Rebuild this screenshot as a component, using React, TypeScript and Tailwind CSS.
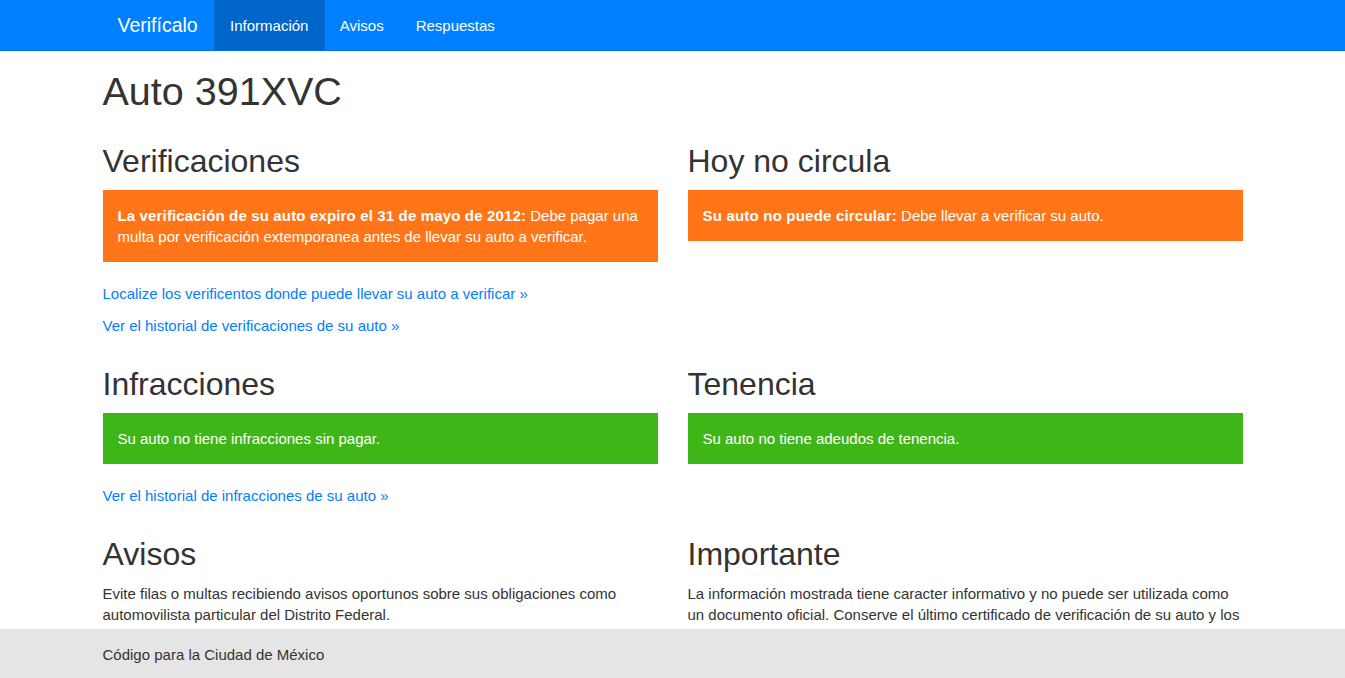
import React from "react";

const font = { fontFamily: '"Liberation Sans", Arial, sans-serif' };

function Heading({ children }: { children: React.ReactNode }) {
  return <h2 className="text-[32px] leading-[1.1] font-normal mt-[21px] mb-[10.5px] text-[#333]">{children}</h2>;
}

function Alert({ color, children }: { color: "warning" | "success"; children: React.ReactNode }) {
  return (
    <div
      className={`p-[15px] mb-[21px] text-white ${color === "warning" ? "bg-[#ff7518]" : "bg-[#3fb618]"}`}
    >
      {children}
    </div>
  );
}

function More({ children }: { children: React.ReactNode }) {
  return (
    <p className="mb-[10.5px]">
      <a href="#" className="text-[#0080ff] hover:underline">
        {children} »
      </a>
    </p>
  );
}

export default function App() {
  return (
    <div className="min-h-screen bg-white text-[15px] leading-[21px] text-[#333] pb-[70px]" style={font}>
      {/* Navbar */}
      <nav className="h-[51px] bg-[#0080ff] border-b border-[#0070e0]">
        <div className="w-[1170px] mx-auto px-[15px] flex h-[50px]">
          <a href="#" className="pl-[15px] pr-[16px] flex items-center text-[19.5px] text-white">
            Verifícalo
          </a>
          <a href="#" className="w-[111px] flex items-center justify-center bg-[#0066cc] text-white">
            Información
          </a>
          <a href="#" className="px-[15px] flex items-center text-white">
            Avisos
          </a>
          <a href="#" className="pl-[17px] pr-[15px] flex items-center text-white">
            Respuestas
          </a>
        </div>
      </nav>

      <div className="w-[1170px] mx-auto px-[15px]">
        <h1 className="text-[39.5px] leading-[1.1] font-normal mt-[18.5px] mb-[10.5px] text-[#333]">Auto 391XVC</h1>

        <div className="grid grid-cols-2 gap-x-[30px]">
          <div>
            <Heading>Verificaciones</Heading>
            <Alert color="warning">
              <strong className="tracking-[0.15px]">La verificación de su auto expiro el 31 de mayo de 2012:</strong>{" "}
              Debe pagar una multa por verificación extemporanea antes de llevar su auto a verificar.
            </Alert>
            <More>Localize los verificentos donde puede llevar su auto a verificar</More>
            <More>Ver el historial de verificaciones de su auto</More>
          </div>
          <div>
            <Heading>Hoy no circula</Heading>
            <Alert color="warning">
              <strong className="tracking-[0.2px]">Su auto no puede circular:</strong> Debe llevar a verificar su
              auto.
            </Alert>
          </div>
        </div>

        <div className="grid grid-cols-2 gap-x-[30px]">
          <div>
            <Heading>Infracciones</Heading>
            <Alert color="success">Su auto no tiene infracciones sin pagar.</Alert>
            <More>Ver el historial de infracciones de su auto</More>
          </div>
          <div>
            <Heading>Tenencia</Heading>
            <Alert color="success">Su auto no tiene adeudos de tenencia.</Alert>
          </div>
        </div>

        <div className="grid grid-cols-2 gap-x-[30px]">
          <div>
            <Heading>Avisos</Heading>
            <p className="mb-[10.5px]">
              Evite filas o multas recibiendo avisos oportunos sobre sus obligaciones como automovilista particular del
              Distrito Federal.
            </p>
          </div>
          <div>
            <Heading>Importante</Heading>
            <p className="mb-[10.5px]">
              La información mostrada tiene caracter informativo y no puede ser utilizada como un documento oficial.
              Conserve el último certificado de verificación de su auto y los comprobantes de pago de tenencia e
              infracciones.
            </p>
          </div>
        </div>
      </div>

      {/* Footer */}
      <footer className="fixed bottom-0 inset-x-0 h-[49px] bg-[#e5e5e5]">
        <div className="w-[1170px] mx-auto px-[15px] pt-[15px]">
          <p>Código para la Ciudad de México</p>
        </div>
      </footer>
    </div>
  );
}
